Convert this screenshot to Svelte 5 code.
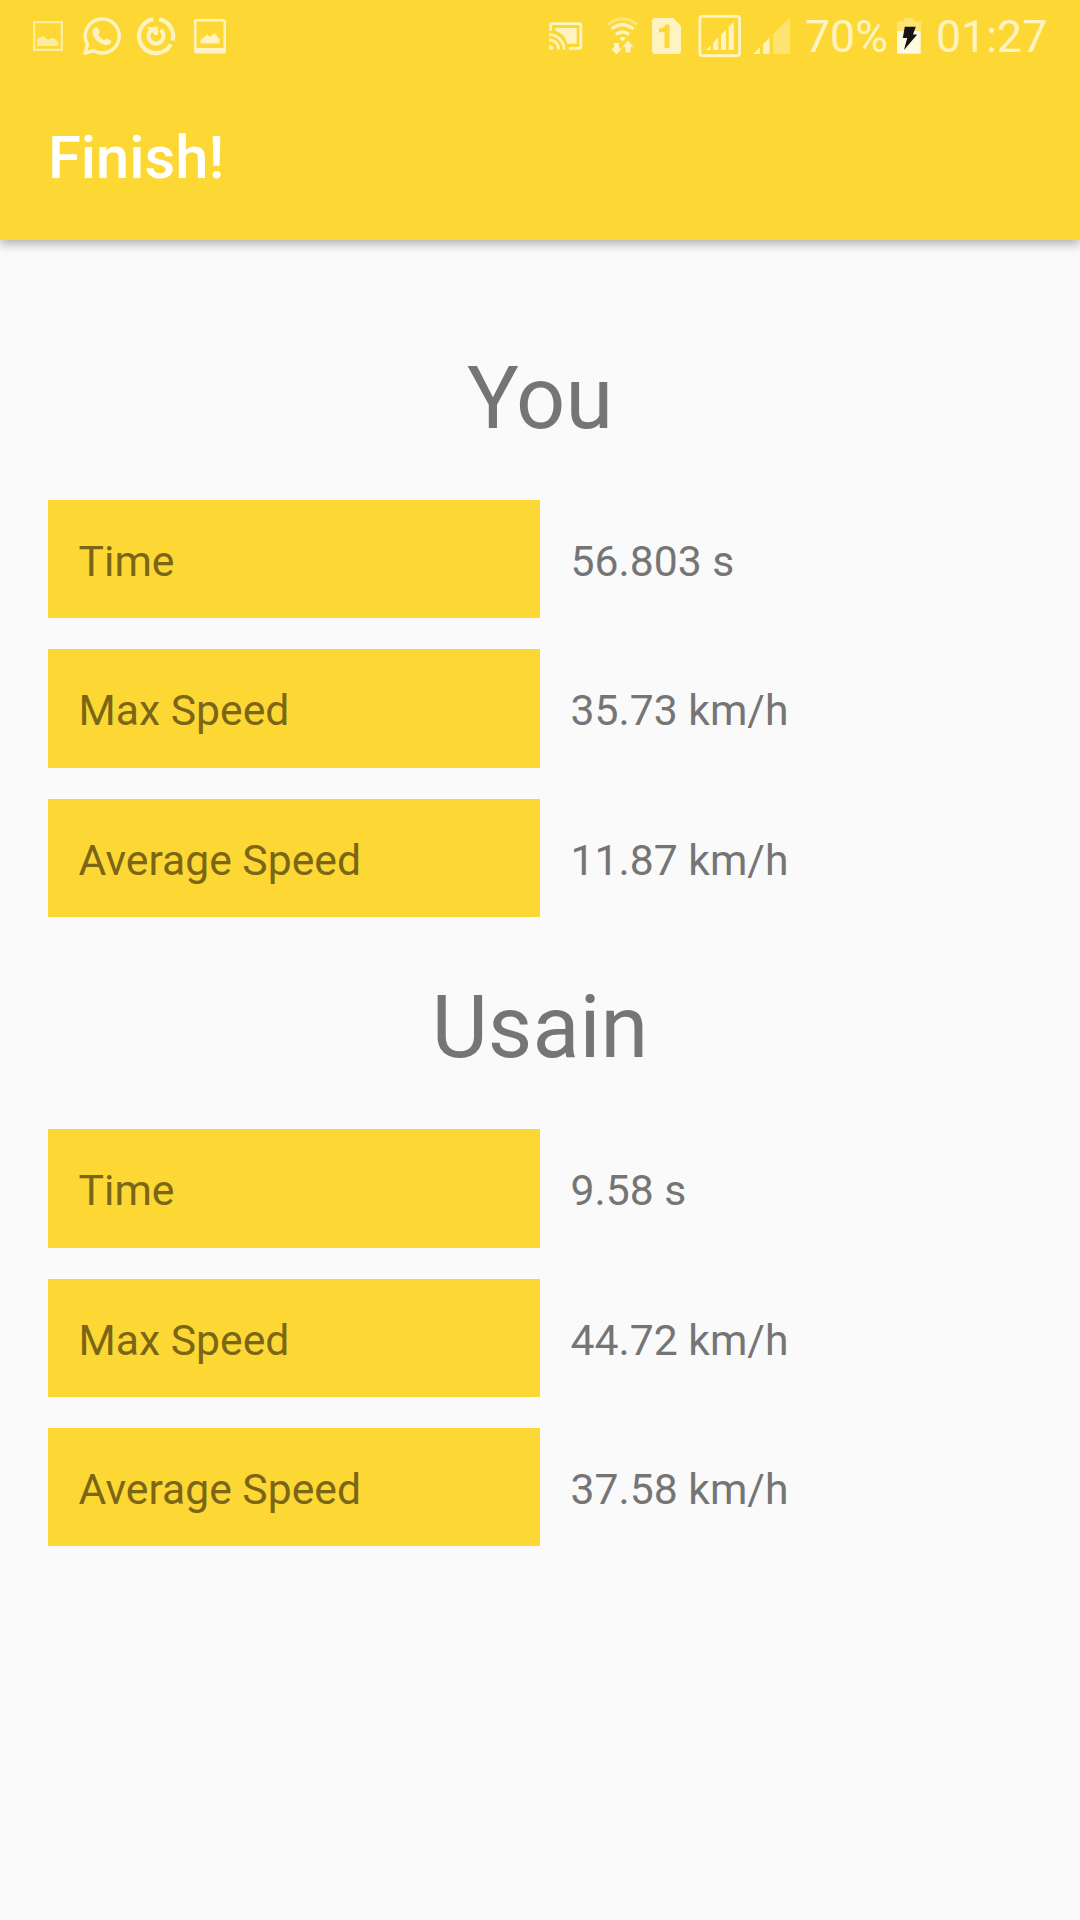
<script>
  const sections = [
    {
      name: 'You',
      stats: [
        ['Time', '56.803 s'],
        ['Max Speed', '35.73 km/h'],
        ['Average Speed', '11.87 km/h'],
      ],
    },
    {
      name: 'Usain',
      stats: [
        ['Time', '9.58 s'],
        ['Max Speed', '44.72 km/h'],
        ['Average Speed', '37.58 km/h'],
      ],
    },
  ];
</script>

<div class="screen">
  <header>
    <div class="status">
      <div class="group">
        <!-- picture -->
        <svg class="dim" width="49" height="72" viewBox="24 0 49 72">
          <path d="M33 21h30v30H33zM35.3 23.3v25.4h25.4V23.3z" fill-rule="evenodd" />
          <path d="M37 46V39.500q1-2 3-2l2.500-1.500q1.500 0 3 2l3 2q2-2 4-2t3.500 2l2.500 2.500v3.500z" />
        </svg>
        <!-- chat bubble with handset -->
        <svg width="56" height="72" viewBox="73 0 56 72">
          <path class="line" stroke-width="3.4" stroke-linejoin="round" d="M85 53.200l2.500-8.800a17 17 0 1 1 6.300 6.300z" />
          <path d="M95 27.500q2.300-1 3.200 1l1.300 3q.4 1.300-1.300 3.300 2 3.600 6 5.400 2-1.900 3-1.500l3.600 1.800q1 .7 0 2.500-1.800 2.700-6 2Q94.500 42 92.300 32.500q0-3.500 2.700-5z" />
        </svg>
        <!-- circular arrow in a ring -->
        <svg width="55" height="72" viewBox="129 0 55 72">
          <path class="line" stroke-width="4.200" d="M153.300 19.300A17 17 0 1 0 170.800 44.500" />
          <path class="line" stroke-width="4.200" d="M159 19.300A17 17 0 0 1 172.500 40.500" />
          <path class="line" stroke-width="4" d="M151.500 30A7.500 7.500 0 1 0 160.500 30" />
          <path d="M146.500 27h9.200v8.500l-3-3.200-2 1.500-1.500-3.800z" />
          <path d="M154.300 26.500h3.700V35h-3.700z" />
        </svg>
        <!-- framed picture -->
        <svg width="51" height="72" viewBox="184 0 51 72">
          <path fill-rule="evenodd" d="M196.500 19h27q2.500 0 2.500 2.500v29.500q0 2.500-2.500 2.500h-27q-2.500 0-2.500-2.500V21.500q0-2.500 2.500-2.500zM196.500 21.500V48h27V21.500z" />
          <path d="M200.500 43.500v-3.500l6.500-5.500 3 2.500 4.500-4 5 6.500v4z" />
        </svg>
      </div>

      <div class="group">
        <!-- cast -->
        <svg width="55" height="72" viewBox="540 0 55 72">
          <path class="line" stroke-width="2.800" d="M550.600 31v-6.300q0-1 1-1h28.300q1 0 1 1v22.600q0 1-1 1H569" />
          <path d="M555.500 28h21.200v15.800h-9.500C566 37 561 32 555.500 31z" />
          <path class="line" stroke-width="2.700" d="M549 34.500a15 15 0 0 1 15 15M549 39.800a9.700 9.700 0 0 1 9.700 9.700" />
          <path d="M549 45.300a4.500 4.500 0 0 1 4.500 4.200H549z" />
        </svg>
        <!-- wifi with traffic arrows -->
        <svg width="50" height="72" viewBox="595 0 50 72">
          <path class="line faded" stroke-width="3" d="M608 24.500q14.500-11.500 29 0" />
          <path class="line" stroke-width="3.400" d="M611.500 29q11-8.500 22 0M616 34.500q6.500-5 13 0" />
          <path d="M619.500 38.200q3-2.500 6 0l-3 3.300z" />
          <path d="M614 43h5v5.500h3l-5.500 6-5.500-6h3zM625.500 52.500h5V46.800h3l-5.500-6-5.500 6h3z" />
        </svg>
        <!-- SIM 1 -->
        <svg width="45" height="72" viewBox="645 0 45 72">
          <path fill-rule="evenodd" d="M655.500 18h18l7.500 8v25q0 3-3 3h-22.500q-3.500 0-3.500-3V21q0-3 3.500-3zM665.500 24.500q-1 4-6.500 4v3.700h5.500V48h5V24.500z" />
        </svg>
        <!-- boxed signal -->
        <svg width="57" height="72" viewBox="690 0 57 72">
          <rect class="line" stroke-width="2.800" x="699.900" y="16.400" width="39.700" height="39.200" rx="2.500" />
          <path d="M706 50l4.500-4.500V50zM713.300 42.500l5-5V50h-5zM721 34.700l5-5V50h-5zM728.700 27l5-5V50h-5z" />
        </svg>
        <!-- signal, partly filled -->
        <svg width="50" height="72" viewBox="747 0 50 72">
          <path d="M753 54l7-6.500V54zM763.300 44l6.200-6.200V54h-6.200z" />
          <path class="faint" d="M773.300 34L790 17.500V54h-16.700z" />
        </svg>
        <span class="level">70%</span>
        <!-- charging battery -->
        <svg width="36" height="72" viewBox="892 0 36 72">
          <path class="faint" d="M904 18h10v3.500h7V31h-24V21.500h7z" />
          <path class="charge" d="M897 31h23.700v22.700H897z" />
          <path class="bolt" d="M904.800 26.700h11l-2.800 7.800h4.200L904 50l3.200-12h-4.400z" />
        </svg>
        <span class="clock">01:27</span>
      </div>
    </div>
    <h1>Finish!</h1>
  </header>

  <main>
    {#each sections as section}
      <section>
        <h2>{section.name}</h2>
        <dl>
          {#each section.stats as [label, value]}
            <div class="row">
              <dt>{label}</dt>
              <dd>{value}</dd>
            </div>
          {/each}
        </dl>
      </section>
    {/each}
  </main>
</div>

<style>
  :global(body) {
    margin: 0;
    background: #fafafa;
  }
  .screen {
    width: 1080px;
    height: 1920px;
    overflow: hidden;
    background: #fafafa;
    font-family: Roboto, sans-serif;
    color: #757575;
  }
  header {
    height: 240px;
    background: #fdd835;
    box-shadow: 0 4px 10px rgba(0, 0, 0, 0.3);
  }
  .status {
    display: flex;
    justify-content: space-between;
    height: 72px;
    padding-left: 24px;
    color: #fff3c2;
    font-size: 44.7px;
    line-height: 75px;
    white-space: nowrap;
  }
  .group {
    display: flex;
  }
  svg {
    display: block;
    flex: none;
    fill: #fff3c2;
  }
  .line {
    fill: none;
    stroke: #fff3c2;
  }
  .dim {
    opacity: 0.75;
  }
  .faded {
    opacity: 0.5;
  }
  .faint {
    fill: #fee373;
  }
  .charge {
    fill: #fffbe0;
  }
  .bolt {
    fill: #151515;
  }
  .level,
  .clock {
    box-sizing: border-box;
    padding-left: 8px;
  }
  .level {
    width: 95px;
  }
  .clock {
    width: 152px;
  }
  h1 {
    margin: 0;
    padding: 50px 48px 0;
    font-size: 59.7px;
    line-height: 72px;
    font-weight: 500;
    color: #fff;
  }
  main {
    padding: 99px 48px 0;
  }
  section {
    height: 629.3px;
  }
  h2 {
    margin: 0;
    padding-bottom: 41px;
    font-size: 86.4px;
    line-height: 120px;
    font-weight: 400;
    text-align: center;
  }
  dl {
    display: grid;
    gap: 31px;
    margin: 0;
  }
  .row {
    display: grid;
    grid-template-columns: 1fr 1fr;
    height: 118.3px;
    font-size: 42.67px;
    line-height: 114.3px;
  }
  dt,
  dd {
    margin: 0;
    padding: 4px 0 0 30.6px;
  }
  dt {
    background: #fdd835;
    color: #7a6616;
  }
</style>
